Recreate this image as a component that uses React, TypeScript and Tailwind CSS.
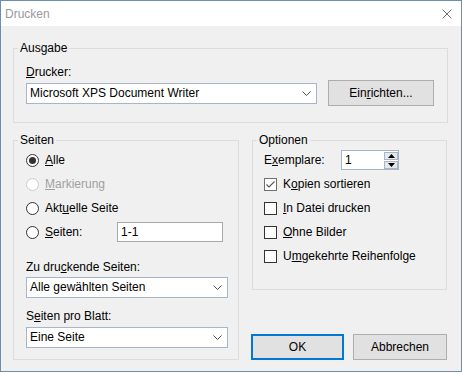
import React from "react";

function Chevron() {
  return (
    <svg width="9" height="5" viewBox="0 0 9 5">
      <path d="M0.5 0.5 L4.5 4.5 L8.5 0.5" fill="none" stroke="#505050" strokeWidth="1" />
    </svg>
  );
}

function Combo({ text, className }: { text: string; className: string }) {
  return (
    <div className={`flex h-[21px] items-center justify-between border border-[#a6b5ca] bg-white pl-[3px] pr-[5px] ${className}`}>
      <span className="leading-[15px]">{text}</span>
      <Chevron />
    </div>
  );
}

function Radio({ checked, disabled }: { checked?: boolean; disabled?: boolean }) {
  return (
    <span
      className={`flex h-[13px] w-[13px] shrink-0 items-center justify-center rounded-full border bg-white ${
        disabled ? "border-[#cccccc]" : "border-[#333333]"
      }`}
    >
      {checked && <span className="h-[7px] w-[7px] rounded-full bg-[#333333]" />}
    </span>
  );
}

function Check({ checked }: { checked?: boolean }) {
  return (
    <span
      className={`flex h-[13px] w-[13px] shrink-0 items-center justify-center border bg-white ${
        checked ? "border-[#707070]" : "border-[#333333]"
      }`}
    >
      {checked && (
        <svg width="11" height="11" viewBox="0 0 11 11">
          <path d="M1.5 5.5 L4 8 L9.5 2.5" fill="none" stroke="#5a5a5a" strokeWidth="1.2" />
        </svg>
      )}
    </span>
  );
}

function U({ children }: { children: React.ReactNode }) {
  return <span className="underline underline-offset-[1px]">{children}</span>;
}

function SpinBtn({ up }: { up?: boolean }) {
  return (
    <div className="flex h-[8px] w-[14px] items-center justify-center border border-[#a6b5ca] bg-[#e8e8e8]">
      <svg width="7" height="4" viewBox="0 0 7 4">
        {up ? <path d="M0 4 L3.5 0 L7 4 Z" fill="#000" /> : <path d="M0 0 L3.5 4 L7 0 Z" fill="#000" />}
      </svg>
    </div>
  );
}

export default function App() {
  return (
    <div className="h-[374px] w-[462px] bg-white font-['Liberation_Sans',Arial,sans-serif] text-[12px] text-black">
      <div className="flex h-[372px] w-[462px] flex-col border border-[#6b8db0]">
        <div className="flex h-[25px] shrink-0 items-center justify-between bg-white pl-[4px] pr-[9px]">
          <span className="text-[#999999]">Drucken</span>
          <svg width="10" height="10" viewBox="0 0 10 10">
            <path d="M0.5 0.5 L9.5 9.5 M9.5 0.5 L0.5 9.5" stroke="#707070" strokeWidth="1" />
          </svg>
        </div>
        <div className="flex flex-1 flex-col bg-[#f0f0f0] pl-[12px] pr-[13px] pt-[14px]">
          <fieldset className="border border-[#dcdcdc] p-0">
            <legend className="ml-[4px] px-[2px] leading-[16px]">Ausgabe</legend>
            <div className="px-[12px] pb-[16px] pt-[9px]">
              <div className="leading-[15px]">
                <U>D</U>rucker:
              </div>
              <div className="flex h-[26px] items-center gap-[11px]">
                <Combo text="Microsoft XPS Document Writer" className="w-[291px]" />
                <div className="flex h-[26px] w-[106px] items-center justify-center border border-[#adadad] bg-[#e1e1e1]">
                  <span>
                    Ein<U>r</U>ichten...
                  </span>
                </div>
              </div>
            </div>
          </fieldset>

          <div className="mt-[9px] flex gap-[13px]">
            <fieldset className="w-[226px] border border-[#dcdcdc] p-0">
              <legend className="ml-[4px] px-[2px] leading-[16px]">Seiten</legend>
              <div className="pb-[9px] pl-[12px] pr-[10px]">
                <div className="flex h-[24px] items-center gap-[6px]">
                  <Radio checked />
                  <span>
                    <U>A</U>lle
                  </span>
                </div>
                <div className="flex h-[24px] items-center gap-[6px] text-[#a0a0a0]">
                  <Radio disabled />
                  <span>
                    <U>M</U>arkierung
                  </span>
                </div>
                <div className="flex h-[24px] items-center gap-[6px]">
                  <Radio />
                  <span>
                    Akt<U>u</U>elle Seite
                  </span>
                </div>
                <div className="flex h-[24px] items-center">
                  <div className="flex w-[91px] items-center gap-[6px]">
                    <Radio />
                    <span>
                      <U>S</U>eiten:
                    </span>
                  </div>
                  <div className="flex h-[20px] w-[106px] items-center border border-[#a9a9a9] bg-white pl-[3px]">
                    1-1
                  </div>
                </div>
                <div className="mt-[15px] leading-[16px]">
                  Zu dru<U>c</U>kende Seiten:
                </div>
                <Combo text="Alle gewählten Seiten" className="mt-[2px] w-[202px]" />
                <div className="mt-[10px] leading-[16px]">
                  S<U>e</U>iten pro Blatt:
                </div>
                <Combo text="Eine Seite" className="mt-[3px] w-[202px]" />
              </div>
            </fieldset>

            <div className="flex w-[195px] flex-col">
              <fieldset className="border border-[#dcdcdc] p-0">
                <legend className="ml-[4px] px-[2px] leading-[16px]">Optionen</legend>
                <div className="pb-[21px] pl-[11px]">
                  <div className="flex h-[24px] items-center">
                    <span className="w-[77px]">
                      E<U>x</U>emplare:
                    </span>
                    <div className="flex h-[20px] w-[58px] items-center justify-between border border-[#a6b5ca] bg-white pl-[3px] pr-[0px]">
                      <span>1</span>
                      <div className="flex flex-col gap-[1px]">
                        <SpinBtn up />
                        <SpinBtn />
                      </div>
                    </div>
                  </div>
                  <div className="flex h-[24px] items-center gap-[6px]">
                    <Check checked />
                    <span>
                      K<U>o</U>pien sortieren
                    </span>
                  </div>
                  <div className="flex h-[24px] items-center gap-[6px]">
                    <Check />
                    <span>
                      <U>I</U>n Datei drucken
                    </span>
                  </div>
                  <div className="flex h-[24px] items-center gap-[6px]">
                    <Check />
                    <span>
                      <U>O</U>hne Bilder
                    </span>
                  </div>
                  <div className="flex h-[24px] items-center gap-[6px]">
                    <Check />
                    <span>
                      U<U>m</U>gekehrte Reihenfolge
                    </span>
                  </div>
                </div>
              </fieldset>
              <div className="mt-[44px] flex justify-end gap-[9px]">
                <div className="flex h-[26px] w-[93px] shrink-0 items-center justify-center border-2 border-[#0078d7] bg-[#e1e1e1]">
                  OK
                </div>
                <div className="flex h-[26px] w-[94px] shrink-0 items-center justify-center border border-[#adadad] bg-[#e1e1e1]">
                  Abbrechen
                </div>
              </div>
            </div>
          </div>
        </div>
      </div>
    </div>
  );
}
